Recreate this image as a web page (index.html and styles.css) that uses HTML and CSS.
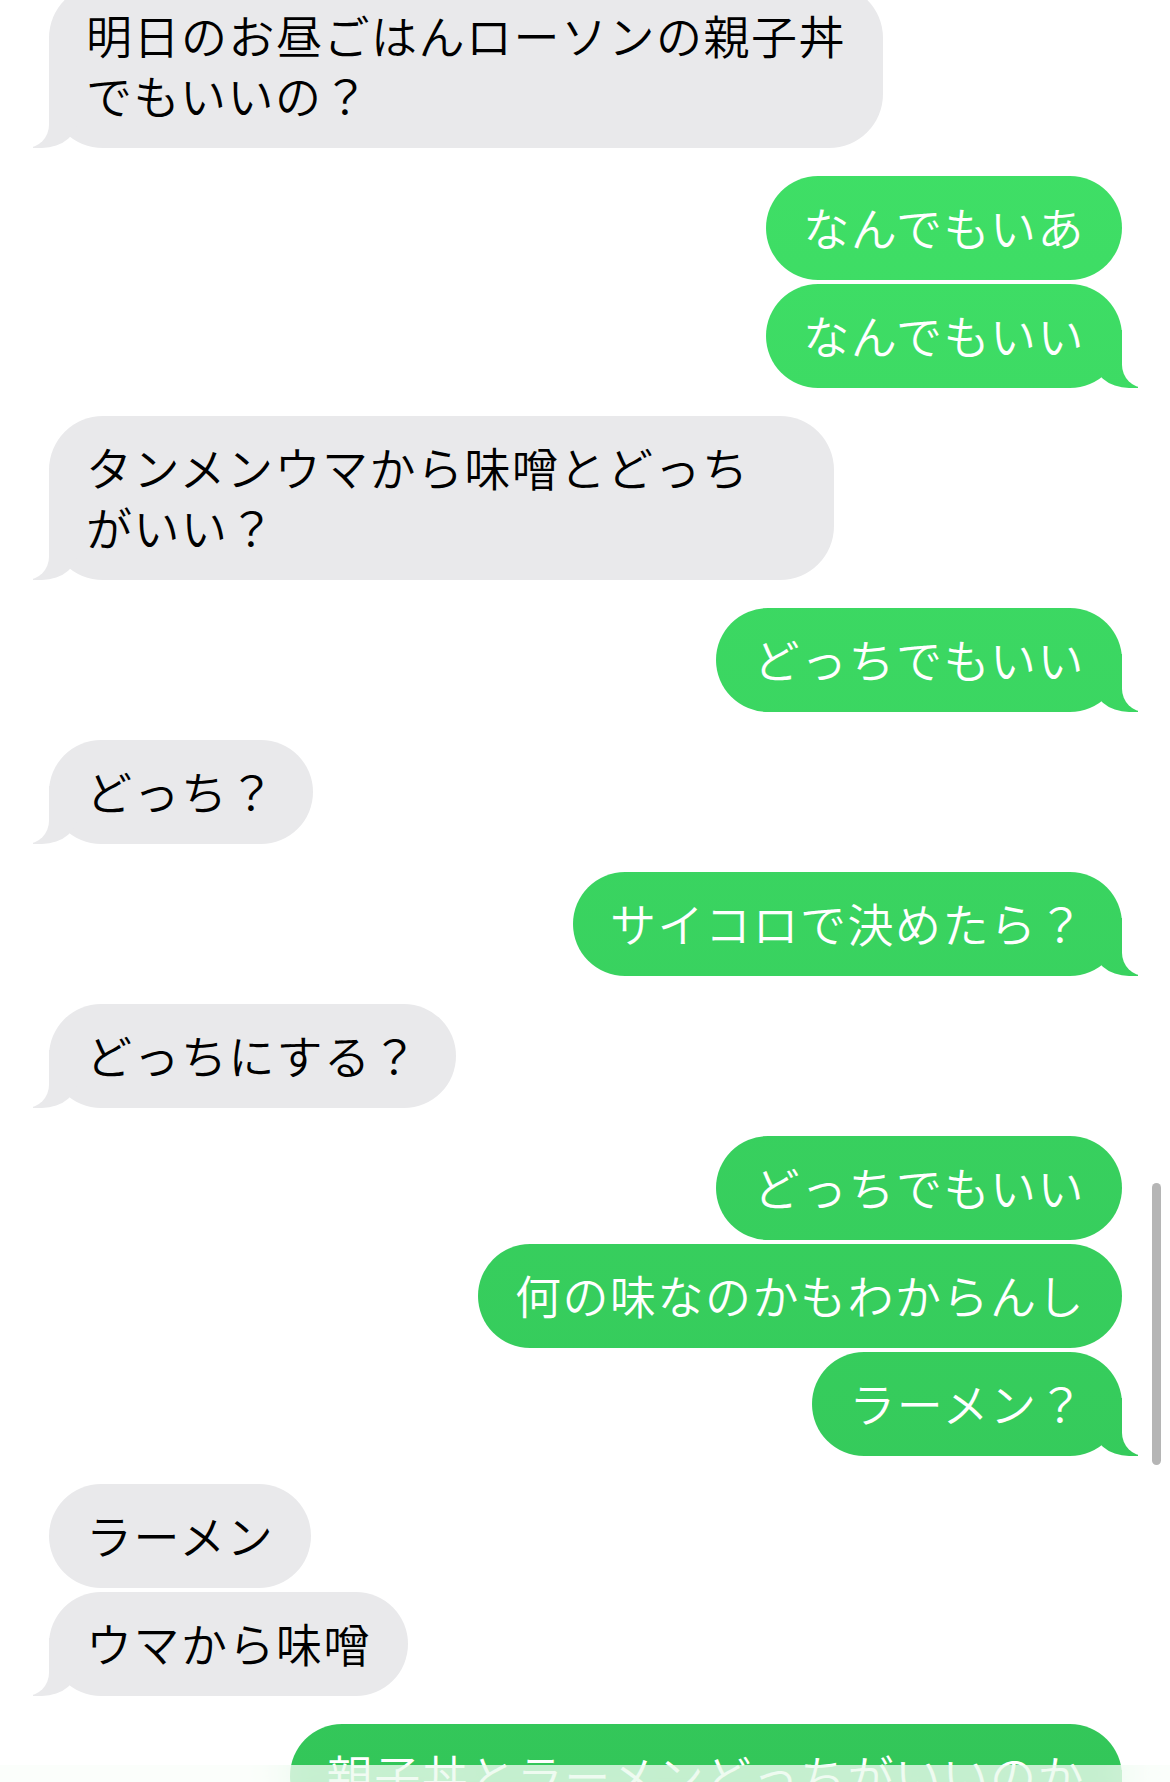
FILE: index.html
```html
<!DOCTYPE html>
<html lang="ja">
<head>
  <meta charset="UTF-8" />
  <meta name="viewport" content="width=device-width, initial-scale=1" />
  <title>メッセージ</title>
  <link rel="stylesheet" href="styles.css">
</head>
<body>

  <main class="thread">
    <div class="group them">
      <p class="bubble tail">明日のお昼ごはんローソンの親子丼<br>でもいいの？</p>
    </div>

    <div class="group me">
      <p class="bubble">なんでもいあ</p>
      <p class="bubble tail">なんでもいい</p>
    </div>

    <div class="group them">
      <p class="bubble tail">タンメンウマから味噌とどっち<span class="space"></span><br>がいい？</p>
    </div>

    <div class="group me">
      <p class="bubble tail">どっちでもいい</p>
    </div>

    <div class="group them">
      <p class="bubble tail">どっち？</p>
    </div>

    <div class="group me">
      <p class="bubble tail">サイコロで決めたら？</p>
    </div>

    <div class="group them">
      <p class="bubble tail">どっちにする？</p>
    </div>

    <div class="group me">
      <p class="bubble">どっちでもいい</p>
      <p class="bubble">何の味なのかもわからんし</p>
      <p class="bubble tail">ラーメン？</p>
    </div>

    <div class="group them">
      <p class="bubble">ラーメン</p>
      <p class="bubble tail">ウマから味噌</p>
    </div>

    <div class="group me">
      <p class="bubble tail">親子丼とラーメンどっちがいいのか</p>
    </div>
  </main>

  <div class="scroll-indicator"></div>
  <div class="input-fade"></div>

</body>
</html>
```

FILE: styles.css
```css
:root {
  --gray: #e9e9eb;
  --green: linear-gradient(to bottom, #40e167 0, #33c659 1782px) fixed;
  --bg: #ffffff;
  --text-dark: #000000;
  --text-light: #ffffff;
}

html,
body {
  margin: 0;
  height: 100%;
}

body {
  background-color: var(--bg);
  font-family: "Noto Sans CJK JP", "Noto Sans", sans-serif;
  overflow: hidden;
}

.thread {
  display: flex;
  flex-direction: column;
  gap: 28px;
  margin-top: -16px;
  padding: 0 48px 0 49px;
}

.group {
  display: flex;
  flex-direction: column;
  gap: 4px;
}

.them {
  align-items: flex-start;
}

.me {
  align-items: flex-end;
}

.bubble {
  position: relative;
  z-index: 0;
  margin: 0;
  padding: 20px 37px 24px 37px;
  font-size: 46px;
  font-weight: 350;
  line-height: 60px;
  letter-spacing: 1.5px;
  border-radius: 54px;
  white-space: nowrap;
}

.them .bubble {
  background: var(--gray);
  color: var(--text-dark);
}

.me .bubble {
  background: var(--green);
  color: var(--text-light);
}

.space {
  display: inline-block;
  width: 47.5px;
}

/* tail on the last bubble of a group */
.tail::before,
.tail::after {
  content: "";
  position: absolute;
  bottom: 0;
  height: 58px;
  z-index: -1;
}

.them .tail::before {
  left: -16px;
  width: 46px;
  background: var(--gray);
  border-bottom-right-radius: 37px 32px;
}

.them .tail::after {
  left: -60px;
  width: 60px;
  background: var(--bg);
  border-bottom-right-radius: 23px;
}

.me .tail::before {
  right: -16px;
  width: 46px;
  background: var(--green);
  border-bottom-left-radius: 37px 32px;
}

.me .tail::after {
  right: -60px;
  width: 60px;
  background: var(--bg);
  border-bottom-left-radius: 23px;
}

.scroll-indicator {
  position: fixed;
  top: 1183px;
  right: 9px;
  width: 9px;
  height: 282px;
  border-radius: 5px;
  background-color: #b5b5b5;
  z-index: 2;
}

.input-fade {
  position: fixed;
  left: 0;
  right: 0;
  bottom: 0;
  height: 17px;
  background-color: rgba(250, 253, 250, 0.72);
  backdrop-filter: blur(24px);
  z-index: 2;
}
```
